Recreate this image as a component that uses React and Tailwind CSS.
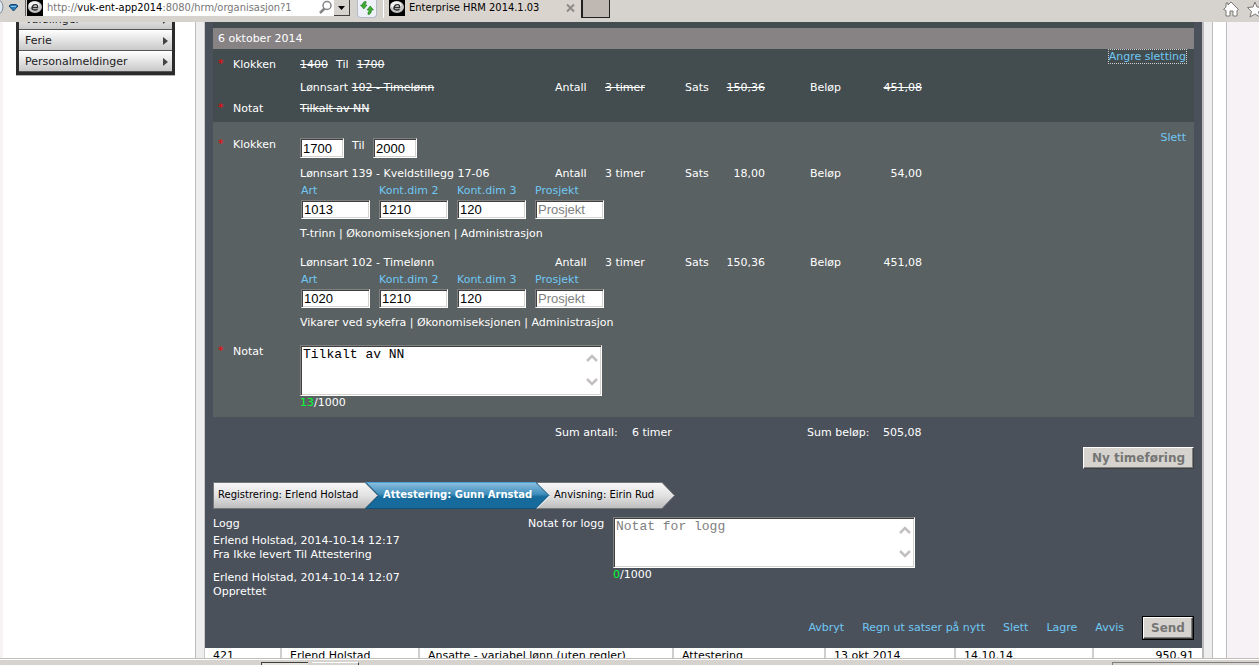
import React, { useState } from "react";

const menuItems = ["Varslinger", "Ferie", "Personalmeldinger"];

const accountLabels = ["Art", "Kont.dim 2", "Kont.dim 3", "Prosjekt"];

const wageLines = [
  {
    id: "139",
    name: "139 - Kveldstillegg 17-06",
    count: "3 timer",
    rate: "18,00",
    amount: "54,00",
    accounts: ["1013", "1210", "120", ""],
    description: "T-trinn | Økonomiseksjonen | Administrasjon",
  },
  {
    id: "102",
    name: "102 - Timelønn",
    count: "3 timer",
    rate: "150,36",
    amount: "451,08",
    accounts: ["1020", "1210", "120", ""],
    description: "Vikarer ved sykefra | Økonomiseksjonen | Administrasjon",
  },
];

const sunken =
  "border border-t-[#808080] border-l-[#808080] border-r-white border-b-white bg-white text-black shadow-[inset_1px_1px_0_#404040,inset_-1px_-1px_0_#d6d3ce] outline-none";

const raised =
  "bg-[#d6d3ce] text-[#757575] font-bold text-[12px] leading-[18px] border border-t-white border-l-white border-r-[#404040] border-b-[#404040] shadow-[inset_-1px_-1px_0_#808080]";

const BrandIcon = () => (
  <svg viewBox="0 0 16 16" className="w-4 h-4 shrink-0">
    <rect width="16" height="16" fill="#000" />
    <ellipse cx="8" cy="7" rx="7" ry="6" fill="#c4c4c4" />
    <ellipse cx="7" cy="5" rx="5.5" ry="3.5" fill="#f2f2f2" />
    <path
      d="M5 7.5h5.500c1-3.500-4-3.800-5.300-.8-1.200 3.300 2.500 4 5.300 2.600"
      fill="none"
      stroke="#2a2a2a"
      strokeWidth="1.300"
    />
  </svg>
);

const BrowserBar = () => (
  <header className="h-[22px] shrink-0 flex items-start bg-[#d6d3ce] text-black overflow-hidden">
    <svg viewBox="0 0 27 18" className="w-[27px] h-[18px] shrink-0">
      <circle cx="-6" cy="7" r="9" fill="#dfe7ee" stroke="#7c8ea0" />
      <path d="M9 6 L11 4.500 H16 L18 6 L13.500 11 Z" fill="#2a78b4" stroke="#16456f" />
      <path d="M11 6.500h5" stroke="#7cc4ee" />
      <path d="M25.500 0V16" stroke="#606060" />
    </svg>
    <div className="w-[323px] h-4 shrink-0 flex items-center bg-white">
      <BrandIcon />
      <div
        role="textbox"
        aria-label="Adresse"
        className="pl-1 flex-1 text-[11px] leading-4 whitespace-nowrap font-['DejaVu_Sans_Condensed','DejaVu_Sans',sans-serif] text-[#767676]"
      >
        http://<span className="text-black">vuk-ent-app2014</span>
        :8080/hrm/organisasjon?1
      </div>
      <svg viewBox="0 0 16 16" className="w-4 h-4 shrink-0" fill="none">
        <circle cx="9" cy="5.500" r="4" stroke="#858585" strokeWidth="1.500" />
        <path d="M6.500 8.500 L2 13" stroke="#858585" strokeWidth="2.500" />
      </svg>
      <button
        aria-label="Vis adresser"
        className="w-4 h-4 shrink-0 flex items-center justify-center bg-[#d6d3ce] border-r border-b border-[#404040]"
      >
        <svg viewBox="0 0 7 4" className="w-[7px] h-1">
          <path d="M0 0h7L3.500 4z" fill="#000" />
        </svg>
      </button>
    </div>
    <button
      aria-label="Oppdater"
      className="ml-[7px] w-5 h-[18px] shrink-0 rounded-b-sm border border-t-0 border-[#b4bcc8] bg-[#eef2f8]"
    >
      <svg viewBox="0 0 18 16" className="w-[18px] h-4" fill="#3fae2f" stroke="#17701c" strokeWidth="0.600">
        <path d="M8 .5C5.500 .5 4.500 2 4.500 4H2.500L5.800 8 9 4H7C7 3 7.300 2.600 8 2.600z" />
        <path d="M10 13.500C12.500 13.500 13.500 11.500 13.500 9H15.500L12.200 5 9 9H11C11 10.500 10.700 11.300 10 11.300z" />
      </svg>
    </button>
    <div className="ml-1.5 pl-[5px] w-[198px] h-[18px] shrink-0 flex items-start border-l border-white bg-[#dad4ce]">
      <BrandIcon />
      <span className="pl-1 flex-1 text-[11px] leading-4 whitespace-nowrap font-['DejaVu_Sans_Condensed','DejaVu_Sans',sans-serif]">
        Enterprise HRM 2014.1.03
      </span>
      <button aria-label="Lukk fane" className="w-[15px] h-4">
        <svg viewBox="0 0 15 16" className="w-[15px] h-4">
          <path d="M1 4.500l7 7m0-7l-7 7" stroke="#8f8b86" strokeWidth="2" />
        </svg>
      </button>
    </div>
    <button
      aria-label="Ny fane"
      className="w-[29px] h-[18px] shrink-0 border-l-2 border-r border-b border-[#202020] bg-[#bfb8b2]"
    ></button>
    <div className="flex-1" />
    <svg viewBox="0 0 36 20" className="w-9 h-5 shrink-0" fill="#fff" stroke="#7b7873">
      <path d="M.5 9.500L3 7V3h2v2L8 2l7.500 7.500-1.500 1V16h-4v-5H7v5H3v-5.500z" />
      <path d="M32 2l2 5 6 .5-4.500 4L37 17l-5-3-5 3 1.500-5.500L24.500 7.500l5.500-.5z" />
    </svg>
  </header>
);

const SideMenu = () => (
  <nav className="ml-[13px] w-[159px] h-[54px] flex flex-col justify-end overflow-hidden border-b border-[#b5b5b5]">
    <ul className="border-x-3 border-b-3 border-[#2a2b2b]">
      {menuItems.map((item) => (
        <li key={item}>
          <a
            href="#"
            className="h-[21px] flex items-center justify-between pt-px pl-1.5 pr-1 border-b border-[#555] bg-linear-to-b from-white to-[#c9c9ca] text-[#222]"
          >
            {item}
            <svg viewBox="0 0 5 8" className="w-[5px] h-2">
              <path d="M0 0L5 4 0 8z" fill="#444" />
            </svg>
          </a>
        </li>
      ))}
    </ul>
  </nav>
);

const Field = ({ label, required, children }) => (
  <div className="flex items-start">
    <span className="w-5 pl-[5px] leading-[11px] text-[#ff0000]">
      {required ? "*" : ""}
    </span>
    <span className="w-[67px]">{label}</span>
    <div className="flex-1">{children}</div>
  </div>
);

const WageRow = ({ name, count, rate, amount, deleted }) => {
  const value = deleted ? "line-through" : "";
  return (
    <div className="grid grid-cols-[255px_50px_80px_40px_40px_45px_112px] whitespace-nowrap">
      <span>
        Lønnsart <span className={value}>{name}</span>
      </span>
      <span>Antall</span>
      <span>
        <span className={value}>{count}</span>
      </span>
      <span>Sats</span>
      <span className="text-right">
        <span className={value}>{rate}</span>
      </span>
      <span className="pl-[45px]">Beløp</span>
      <span className="text-right">
        <span className={value}>{amount}</span>
      </span>
    </div>
  );
};

const WageLine = ({ line }) => (
  <div>
    <WageRow {...line} />
    <div className="mt-[3px] pl-px flex gap-[9px]">
      {accountLabels.map((label, index) => (
        <label key={label} className="w-[69px] whitespace-nowrap text-[#6fc8f5]">
          {label}
          <input
            type="text"
            defaultValue={line.accounts[index]}
            placeholder={label}
            className={`mt-0.5 block w-full h-[19px] px-0.5 font-['Liberation_Sans',Arial,sans-serif] text-[13px] placeholder:text-[#808080] ${sunken}`}
          />
        </label>
      ))}
    </div>
    <div className="mt-2">{line.description}</div>
  </div>
);

const NoteBox = ({ id, initial, placeholder, label }) => {
  const [text, setText] = useState(initial);
  return (
    <div className="w-[302px]">
      <div className="relative">
        <textarea
          id={id}
          aria-label={label}
          value={text}
          placeholder={placeholder}
          onChange={(e) => setText(e.target.value)}
          className={`block w-full h-[51px] pt-px pl-0.5 pr-4 resize-none overflow-hidden font-['Liberation_Mono','Courier_New',monospace] text-[13px] leading-4 placeholder:text-[#808080] ${sunken}`}
        />
        <svg
          viewBox="0 0 12 36"
          className="absolute right-1 top-2 w-3 h-9"
          fill="none"
          stroke="#c3bfc3"
          strokeWidth="2.500"
        >
          <path d="M1 8L6 3l5 5" />
          <path d="M1 26l5 5 5-5" />
        </svg>
      </div>
      <div>
        <span className="text-[#00ff33]">{text.length}</span>/1000
      </div>
    </div>
  );
};

const Steps = () => (
  <ol className="relative flex w-[462px] h-[27px] items-start text-[10px] leading-[25px] text-black whitespace-nowrap">
    <svg viewBox="0 0 462 27" className="absolute inset-0 w-[462px] h-[27px]">
      <defs>
        <linearGradient id="grey" x1="0" y1="0" x2="0" y2="1">
          <stop offset="0" stopColor="#f8f8f9" />
          <stop offset="0.500" stopColor="#e2e2e3" />
          <stop offset="1" stopColor="#bcbcbd" />
        </linearGradient>
        <linearGradient id="blue" x1="0" y1="0" x2="0" y2="1">
          <stop offset="0" stopColor="#8bbfe0" />
          <stop offset="0.450" stopColor="#3e8dbb" />
          <stop offset="0.550" stopColor="#176b9c" />
          <stop offset="1" stopColor="#176b9c" />
        </linearGradient>
      </defs>
      <path d="M324 .5H449L461.500 13.500 449 26.500H324z" fill="url(#grey)" stroke="#75777a" />
      <path d="M152 .5H323L336 13.500 323 26.500H152z" fill="url(#blue)" stroke="#0f527c" />
      <path d="M152 .5H323" stroke="#4aa0d8" />
      <path d="M336.500 14L324 26.500" fill="none" stroke="#fff" />
      <path d="M.5 .5H152L165 13.500 152 26.500H.5z" fill="url(#grey)" stroke="#75777a" />
      <path d="M153 .5L165.500 13.500 153 26.500" fill="none" stroke="#0f527c" />
    </svg>
    <li className="relative w-[170px] pl-[5px]">Registrering: Erlend Holstad</li>
    <li className="relative w-[171px] font-bold text-white">Attestering: Gunn Arnstad</li>
    <li className="relative">Anvisning: Eirin Rud</li>
  </ol>
);

const DeletedEntry = () => (
  <section className="relative h-[73px] pt-[9px] bg-[#434d50]">
    <Field label="Klokken" required>
      <span className="line-through">1400</span>
      <span className="mx-2">Til</span>
      <span className="line-through">1700</span>
    </Field>
    <div className="mt-[9px]">
      <Field>
        <WageRow name="102 - Timelønn" count="3 timer" rate="150,36" amount="451,08" deleted />
      </Field>
    </div>
    <div className="mt-[7px]">
      <Field label="Notat" required>
        <span className="line-through">Tilkalt av NN</span>
      </Field>
    </div>
    <a
      href="#"
      className="absolute right-2 top-px leading-[13px] text-[#6fc8f5] outline-1 outline-dotted outline-[#d0d0d0]"
    >
      Angre sletting
    </a>
  </section>
);

const ActiveEntry = () => (
  <section className="relative pt-4 pb-[7px] bg-[#5a6162]">
    <Field label="Klokken" required>
      <div className="flex items-start gap-2">
        <input
          aria-label="Fra"
          type="text"
          defaultValue="1700"
          className={`w-11 h-5 px-0.5 font-['Liberation_Sans',Arial,sans-serif] text-[13px] ${sunken}`}
        />
        <span className="w-[13px] leading-4">Til</span>
        <input
          aria-label="Til"
          type="text"
          defaultValue="2000"
          className={`w-11 h-5 px-0.5 font-['Liberation_Sans',Arial,sans-serif] text-[13px] ${sunken}`}
        />
      </div>
    </Field>
    <div className="mt-[9px]">
      <Field>
        <div className="flex flex-col gap-[15px]">
          {wageLines.map((line) => (
            <WageLine key={line.id} line={line} />
          ))}
        </div>
      </Field>
    </div>
    <div className="mt-[15px]">
      <Field label="Notat" required>
        <NoteBox id="note" label="Notat" initial="Tilkalt av NN" />
      </Field>
    </div>
    <a href="#" className="absolute right-2 top-[9px] text-[#6fc8f5]">
      Slett
    </a>
  </section>
);

const TimeSheet = () => (
  <div className="px-2">
    <div className="h-1.5 bg-[#434d50]" />
    <h2 className="h-[21px] pl-[5px] leading-[22px] bg-[#878385]">6 oktober 2014</h2>
    <DeletedEntry />
    <ActiveEntry />
    <div className="mt-[9px] pl-[342px] flex">
      <span className="w-[77px]">Sum antall:</span>
      <span className="w-[175px]">6 timer</span>
      <span className="w-[76px]">Sum beløp:</span>
      <span>505,08</span>
    </div>
    <div className="mt-[7px] flex justify-end">
      <button className={`w-[111px] h-[22px] ${raised}`}>Ny timeføring</button>
    </div>
    <div className="mt-[13px]">
      <Steps />
    </div>
    <div className="mt-2 h-[99px] flex items-start">
      <div className="w-[315px]">
        <p>Logg</p>
        <p className="mt-[3px]">Erlend Holstad, 2014-10-14 12:17</p>
        <p>Fra Ikke levert Til Attestering</p>
        <p className="mt-[9px]">Erlend Holstad, 2014-10-14 12:07</p>
        <p>Opprettet</p>
      </div>
      <label htmlFor="log-note" className="w-[85px]">
        Notat for logg
      </label>
      <NoteBox id="log-note" initial="" placeholder="Notat for logg" />
    </div>
    <div className="h-6 flex items-center justify-end gap-[18px] text-[#6fc8f5]">
      <a href="#">Avbryt</a>
      <a href="#">Regn ut satser på nytt</a>
      <a href="#">Slett</a>
      <a href="#">Lagre</a>
      <a href="#">Avvis</a>
      <span className="border border-black">
        <button className={`block w-[50px] h-[22px] ${raised}`}>Send</button>
      </span>
    </div>
  </div>
);

const SheetTable = () => (
  <table className="mt-2 w-full table-fixed bg-white text-black">
    <colgroup>
      <col className="w-[76px]" />
      <col className="w-[138px]" />
      <col className="w-[254px]" />
      <col className="w-[152px]" />
      <col className="w-[130px]" />
      <col className="w-[138px]" />
      <col />
    </colgroup>
    <tbody>
      <tr className="h-4 whitespace-nowrap *:border-r-2 *:border-[#cfcfcf] *:px-2 *:last:border-r-0">
        <td>421</td>
        <td>Erlend Holstad</td>
        <td>Ansatte - variabel lønn (uten regler)</td>
        <td>Attestering</td>
        <td>13 okt 2014</td>
        <td>14.10.14</td>
        <td className="text-right">950,91</td>
      </tr>
    </tbody>
  </table>
);

const StatusBar = () => (
  <footer className="h-[7px] shrink-0 flex items-end bg-[#d6d3ce] border-t border-[#c0bdb8] shadow-[inset_0_1px_0_#fff]">
    <div className="ml-[261px] w-[47px] h-[3px] border-t border-l border-[#404040] bg-[#e6e3de]" />
    <div className="ml-1 w-[47px] h-[3px] border-t border-t-white border-r border-r-[#404040]" />
    <div className="flex-1" />
    <div className="w-[147px] h-[3px] border-t border-l border-[#808080]" />
  </footer>
);

const App = () => {
  return (
    <div className="h-screen flex flex-col overflow-hidden bg-white font-['DejaVu_Sans',Verdana,sans-serif] text-[11px] leading-[14px]">
      <BrowserBar />
      <div className="flex-1 min-h-0 flex overflow-hidden">
        <aside className="w-[196px] shrink-0 border-l-3 border-l-[#f7f2f6] border-r border-r-[#bdbdbd]">
          <SideMenu />
        </aside>
        <div className="w-[9px] shrink-0 bg-[#eee] border-r border-[#c9c9c9]" />
        <main className="flex-1 min-w-0 bg-[#4b515b] text-white">
          <TimeSheet />
          <SheetTable />
        </main>
        <div className="w-[11px] shrink-0 bg-[#eee] border-l-2 border-r border-[#bdbdbd]" />
        <div className="w-[14px] shrink-0 border-r border-[#bdbdbd]" />
        <div className="w-8 shrink-0 bg-[#f7f2f6]" />
      </div>
      <StatusBar />
    </div>
  );
};

export default App;
